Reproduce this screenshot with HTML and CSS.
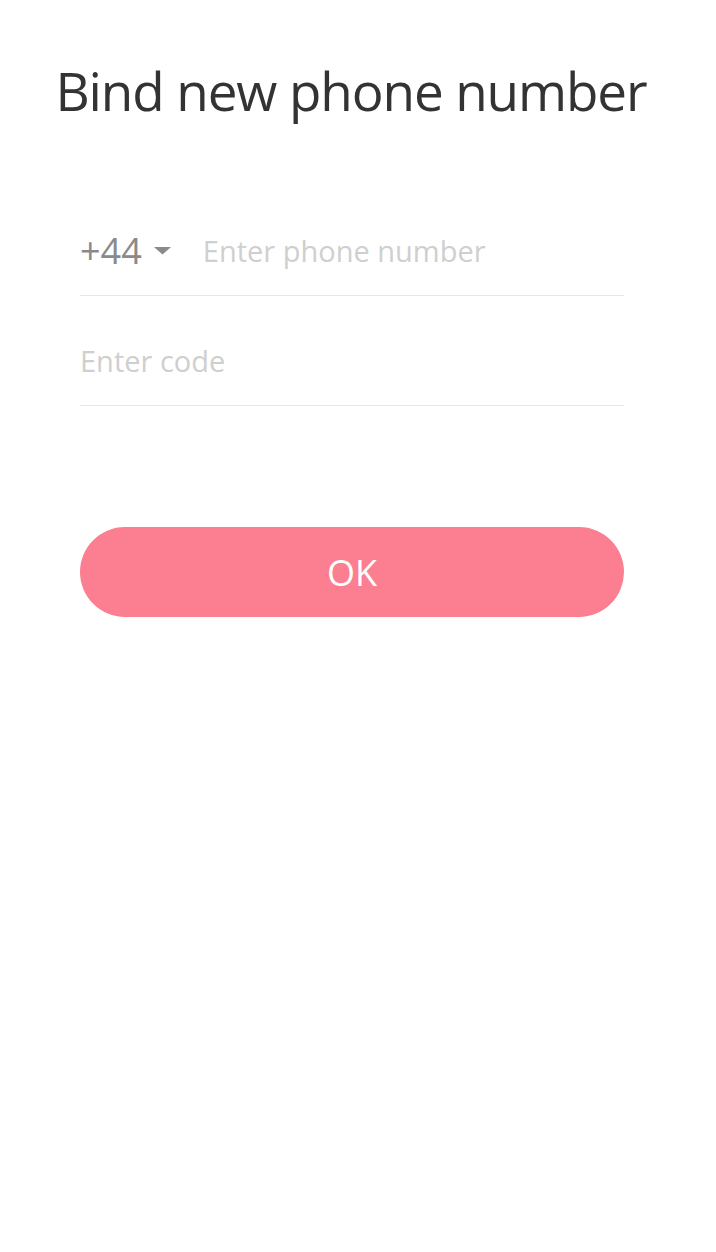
FILE: index.html
```html
<!DOCTYPE html>
<html>
<head>
    <title>Bind new phone number</title>
    <meta charset="UTF-8">
    <meta name="viewport" content="width=device-width, initial-scale=1.0">
    <link rel="stylesheet" href="styles.css">
</head>
<body>
    <h1 class="title">Bind new phone number</h1>

    <div class="form">
        <div class="field">
            <div class="country">
                <span class="code">+44</span>
                <svg class="caret" width="17" height="8" viewBox="0 0 17 8"><path d="M0 0 L17 0 L8.5 7.5 Z" fill="#8a8a8a"/></svg>
            </div>
            <input type="text" class="input" placeholder="Enter phone number">
        </div>
        <div class="field">
            <input type="text" class="input" placeholder="Enter code">
        </div>

        <button class="ok">OK</button>
    </div>
</body>
</html>
```

FILE: styles.css
```css
body {
    margin: 0;
    background: #fff;
    font-family: "Open Sans", "Noto Sans", sans-serif;
}
.title {
    margin: 0 14px 0 0;
    padding-top: 56px;
    text-align: center;
    font-size: 53px;
    font-weight: 400;
    letter-spacing: -1.1px;
    color: #333;
    line-height: 70px;
}
.form {
    margin: 0 92px 0 80px;
    padding-top: 60px;
}
.field {
    display: flex;
    align-items: center;
    height: 89px;
    padding-top: 20px;
    border-bottom: 1px solid #e6e6e6;
}
.country {
    display: flex;
    align-items: center;
    margin-right: 32px;
}
.code {
    font-size: 36px;
    color: #8a8a8a;
    margin-right: 12px;
}
.input {
    flex: 1;
    border: none;
    outline: none;
    padding: 0;
    font-family: inherit;
    font-size: 29px;
    color: #333;
    background: transparent;
}
.input::placeholder {
    color: #cfcfcf;
}
.ok {
    display: block;
    width: 100%;
    height: 90px;
    margin-top: 121px;
    border: none;
    border-radius: 45px;
    background: #fb7f90;
    color: #fff;
    font-family: inherit;
    font-size: 36px;
}
```
